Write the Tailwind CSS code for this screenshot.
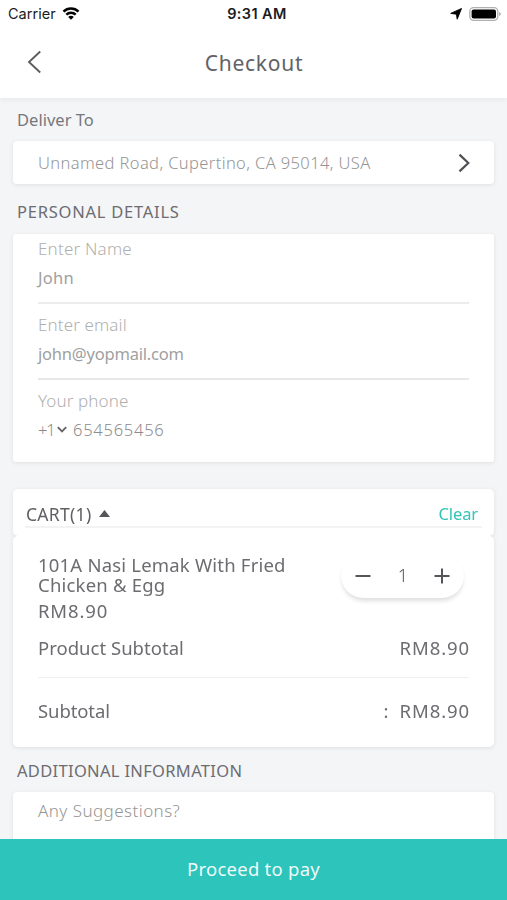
<!DOCTYPE html>
<html lang="en">
<head>
<meta charset="utf-8">
<title>Checkout</title>
<script src="https://cdn.jsdelivr.net/npm/@tailwindcss/browser@4"></script>
</head>
<body class="bg-[#f4f5f7]">
<div class="flex h-[900px] w-[507px] flex-col overflow-hidden bg-[#f4f5f7] font-['Noto_Sans',sans-serif] text-[#6c6c71] whitespace-nowrap">
  <header class="h-[98px] shrink-0 bg-white shadow-[0_3px_4px_rgba(0,0,0,0.04)]">
    <div class="grid h-7 grid-cols-3 items-center pl-[8px] pr-[6px] font-['Inter',sans-serif] text-[14.5px] text-[#1c1c1c]">
      <div class="flex items-center gap-[6px]">
        <span class="tracking-[0.02px]">Carrier</span>
        <svg class="mb-[2px] h-[13px] w-[18px]" viewBox="0 0 17 13" fill="none" stroke="#000" stroke-width="2.5"><path d="M1 4.6a10.7 10.7 0 0 1 15 0M3.8 7.6a6.7 6.7 0 0 1 9.4 0"/><path d="M8.5 12.8 5.7 9.9a3.9 3.9 0 0 1 5.6 0z" fill="#000" stroke="none"/></svg>
      </div>
      <span class="pl-[5px] text-center font-semibold tracking-[0.4px]">9:31 AM</span>
      <div class="flex items-center justify-end gap-[7px]">
        <svg class="h-[12px] w-[12px]" viewBox="0 0 12 12"><path d="M11.5.5 7.2 11.2 6.4 6.2.7 5.4z" fill="#000" stroke="#000" stroke-width=".9" stroke-linejoin="round"/></svg>
        <svg class="mb-px h-[14px] w-[32px]" viewBox="0 0 32 14"><rect x=".8" y=".7" width="28" height="12.6" rx="3.8" fill="#fff" stroke="#b0b0b0" stroke-width="1.3"/><rect x="2.6" y="2.5" width="24.4" height="9" rx="2" fill="#000"/><path d="M30.3 5v4q1.4-.6 1.4-2t-1.4-2z" fill="#999"/></svg>
      </div>
    </div>
    <div class="grid h-[70px] grid-cols-[60px_1fr_60px] items-center">
      <svg class="mb-[2px] ml-[27px] h-6 w-4" viewBox="0 0 16 24" fill="none" stroke="#5c5c61" stroke-width="1.9"><path d="M13.2 1.5 2 12l11.2 10.5"/></svg>
      <h1 class="pl-px text-center text-[21px] leading-[70px] tracking-[0.75px] text-[#626267]">Checkout</h1>
    </div>
  </header>

  <main class="min-h-0 flex-1 overflow-hidden px-[13px]">
    <h2 class="ml-[4px] h-[43px] text-[16.5px] leading-[43px] tracking-[0.02px] text-[#77777b]">Deliver To</h2>
    <div class="flex h-[43px] items-center justify-between rounded-[4px] bg-white pl-[25px] pr-[24px] shadow-[0_1px_4px_rgba(0,0,0,0.09)]">
      <span class="text-[16.5px] font-light leading-[41px] tracking-[0.38px] text-[#959595]">Unnamed Road, Cupertino, CA 95014, USA</span>
      <svg class="h-5 w-3" viewBox="0 0 12 20" fill="none" stroke="#505055" stroke-width="2.2"><path d="m1.5 1.6 8.8 8.4-8.8 8.4"/></svg>
    </div>

    <h2 class="ml-[4px] h-[50px] pt-[6px] text-[16.5px] leading-[44px] tracking-[0.76px]">PERSONAL DETAILS</h2>
    <div class="h-[228px] rounded-[3px] bg-white px-[25px] text-[16.5px] text-[#a0a0a0] shadow-[0_1px_4px_rgba(0,0,0,0.09)]">
      <div class="flex h-[70px] flex-col border-b-2 border-[#ececec]">
        <label class="h-[30px] text-[17px] font-light leading-[30px] tracking-[0.2px] text-[#b0b0b0]">Enter Name</label>
        <span class="leading-[28px] tracking-[0.3px]">John</span>
      </div>
      <div class="flex h-[76px] flex-col border-b-2 border-[#e8e8e8] pt-[6px]">
        <label class="h-[30px] text-[17px] font-light leading-[30px] tracking-[0.12px] text-[#b0b0b0]">Enter email</label>
        <span class="leading-[27px] tracking-[-0.2px]">john@yopmail.com</span>
      </div>
      <div class="flex flex-col pt-[6px]">
        <label class="h-[30px] text-[17px] font-light leading-[30px] tracking-[0.1px] text-[#b0b0b0]">Your phone</label>
        <div class="flex items-center leading-[27px]">
          <span class="w-[19px] font-light tracking-[-1.2px] text-[#8c8c8c]">+1</span>
          <svg class="h-[7px] w-[10px]" viewBox="0 0 10 7" fill="none" stroke="#66666a" stroke-width="1.9"><path d="m.8 1.2 4.2 4.2 4.2-4.2"/></svg>
          <span class="pl-[6px] font-light tracking-[0.75px] text-[#8c8c8c]">654565456</span>
        </div>
      </div>
    </div>

    <section class="mt-[27px] drop-shadow-[0_1px_2px_rgba(0,0,0,0.09)]">
      <div class="h-[47px] rounded-[5px] bg-white px-[12px]">
        <div class="flex h-[39px] items-start justify-between border-b-2 border-[#f3f3f4]">
          <div class="flex h-[37px] items-center gap-[8px] pt-[12px]">
            <span class="pl-px text-[17.5px] leading-[24px] tracking-[0.3px] text-[#5f5f64]">CART(1)</span>
            <svg class="h-[7px] w-[11px]" viewBox="0 0 11 7"><path d="M5.5 0 11 7H0z" fill="#55555a"/></svg>
          </div>
          <span class="mr-[4px] pt-[13px] text-[16.5px] leading-[24px] tracking-[-0.1px] text-[#35c3b8]">Clear</span>
        </div>
      </div>
      <div class="h-[211px] rounded-[5px] bg-white px-[25px] text-[18.5px]">
        <div class="flex justify-between pt-[19px]">
          <div>
            <p class="h-[40px] leading-[20px] tracking-[0.2px]">101A Nasi Lemak With Fried<br>Chicken &amp; Egg</p>
            <p class="mt-[2px] leading-[28px] tracking-[0.85px]">RM8.90</p>
          </div>
          <div class="mr-[5px] -mt-[2px] flex h-[45px] w-[123px] items-center justify-between rounded-[23px] bg-white px-[14px] shadow-[0_4px_4px_-1px_rgba(0,0,0,0.13)]">
            <svg class="h-4 w-4" viewBox="0 0 16 16" stroke="#55555a" stroke-width="2"><path d="M.5 8h15"/></svg>
            <span class="pl-px text-[18px] font-light text-[#55555a]">1</span>
            <svg class="h-4 w-4" viewBox="0 0 16 16" stroke="#55555a" stroke-width="2"><path d="M.5 8h15M8 .5v15"/></svg>
          </div>
        </div>
        <div class="flex h-[53px] justify-between border-b border-[#efefef] leading-[45px]"><span class="tracking-[0.02px]">Product Subtotal</span><span class="-mr-px tracking-[0.9px]">RM8.90</span></div>
        <div class="flex leading-[66px]"><span class="flex-1 tracking-[-0.1px]">Subtotal</span><span class="w-[16px]">:</span><span class="-mr-px tracking-[0.9px]">RM8.90</span></div>
      </div>
    </section>

    <h2 class="ml-[4px] h-[45px] pt-[3px] text-[16.5px] leading-[42px] tracking-[0.32px]">ADDITIONAL INFORMATION</h2>
    <div class="h-[60px] rounded-[4px] bg-white px-[25px] shadow-[0_1px_4px_rgba(0,0,0,0.09)]">
      <span class="block text-[17px] font-light leading-[38px] tracking-[0.45px] text-[#959595]">Any Suggestions?</span>
    </div>
  </main>
  <button class="h-[61px] shrink-0 bg-[#2dc4bb] pb-[2px] text-[18.5px] leading-[58px] tracking-[0.25px] text-white/95">Proceed to pay</button>
</div>
</body>
</html>
